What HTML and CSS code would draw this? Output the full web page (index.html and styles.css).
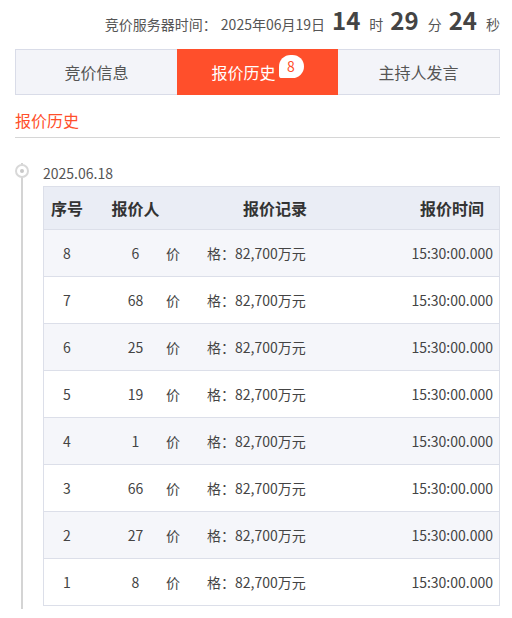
FILE: index.html
```html
<!DOCTYPE html>
<html lang="zh-CN">
<head>
    <meta charset="UTF-8">
    <meta name="viewport" content="width=device-width, initial-scale=1.0">
    <title>报价历史</title>
    <link rel="stylesheet" href="styles.css">
</head>
<body>
    <div class="container">
        <div class="clock">
            <span class="clock-label">竞价服务器时间：</span>
            <span class="clock-date">2025年06月19日</span>
            <span class="clock-num">14</span><span class="clock-unit">时</span>
            <span class="clock-num">29</span><span class="clock-unit">分</span>
            <span class="clock-num">24</span><span class="clock-unit">秒</span>
        </div>

        <div class="tabs">
            <div class="tab">竞价信息</div>
            <div class="tab active">报价历史<span class="badge">8</span></div>
            <div class="tab">主持人发言</div>
        </div>

        <h2 class="section-title">报价历史</h2>

        <div class="timeline">
            <span class="dot"></span>
            <div class="date">2025.06.18</div>
            <div class="records">
                <div class="row head">
                    <div class="c-no">序号</div>
                    <div class="c-who">报价人</div>
                    <div class="c-rec">报价记录</div>
                    <div class="c-time">报价时间</div>
                </div>
                <div class="row">
                    <div class="c-no">8</div>
                    <div class="c-who">6</div>
                    <div class="c-rec"><span>价</span><span class="price">格：82,700万元</span></div>
                    <div class="c-time">15:30:00.000</div>
                </div>
                <div class="row">
                    <div class="c-no">7</div>
                    <div class="c-who">68</div>
                    <div class="c-rec"><span>价</span><span class="price">格：82,700万元</span></div>
                    <div class="c-time">15:30:00.000</div>
                </div>
                <div class="row">
                    <div class="c-no">6</div>
                    <div class="c-who">25</div>
                    <div class="c-rec"><span>价</span><span class="price">格：82,700万元</span></div>
                    <div class="c-time">15:30:00.000</div>
                </div>
                <div class="row">
                    <div class="c-no">5</div>
                    <div class="c-who">19</div>
                    <div class="c-rec"><span>价</span><span class="price">格：82,700万元</span></div>
                    <div class="c-time">15:30:00.000</div>
                </div>
                <div class="row">
                    <div class="c-no">4</div>
                    <div class="c-who">1</div>
                    <div class="c-rec"><span>价</span><span class="price">格：82,700万元</span></div>
                    <div class="c-time">15:30:00.000</div>
                </div>
                <div class="row">
                    <div class="c-no">3</div>
                    <div class="c-who">66</div>
                    <div class="c-rec"><span>价</span><span class="price">格：82,700万元</span></div>
                    <div class="c-time">15:30:00.000</div>
                </div>
                <div class="row">
                    <div class="c-no">2</div>
                    <div class="c-who">27</div>
                    <div class="c-rec"><span>价</span><span class="price">格：82,700万元</span></div>
                    <div class="c-time">15:30:00.000</div>
                </div>
                <div class="row">
                    <div class="c-no">1</div>
                    <div class="c-who">8</div>
                    <div class="c-rec"><span>价</span><span class="price">格：82,700万元</span></div>
                    <div class="c-time">15:30:00.000</div>
                </div>
            </div>
        </div>
    </div>
</body>
</html>
```

FILE: styles.css
```css
* {
    box-sizing: border-box;
    margin: 0;
    padding: 0;
}

body {
    font-family: "Noto Sans CJK SC", "Noto Sans", sans-serif;
    color: #444;
    background-color: #fff;
}

.container {
    padding: 0 12px 0 15px;
}

.clock {
    display: flex;
    justify-content: flex-end;
    align-items: baseline;
    height: 40px;
    padding-top: 2px;
    font-size: 14px;
    color: #555;
}

.clock-date {
    margin-left: 4px;
}

.clock-num {
    font-size: 24px;
    font-weight: bold;
    color: #444;
    margin: 0 9px 0 7px;
}

.tabs {
    display: flex;
    height: 46px;
    margin-top: 9px;
    border: 1px solid #d9dce8;
    background-color: #f3f4f9;
}

.tab {
    flex: 1;
    display: flex;
    align-items: center;
    justify-content: center;
    font-size: 16px;
    color: #555;
}

.tab + .tab {
    border-left: 1px solid #d9dce8;
}

.tab.active {
    background-color: #ff4f2b;
    color: #fff;
    margin: -1px 0;
    border-left: none;
}

.tab.active + .tab {
    border-left: none;
}

.badge {
    display: inline-flex;
    align-items: center;
    justify-content: center;
    width: 25px;
    height: 23px;
    margin: -12px 0 0 3px;
    border-radius: 12px 12px 12px 3px;
    background-color: #fff;
    color: #ff4f2b;
    font-size: 14px;
}

.section-title {
    margin-top: 13px;
    padding-bottom: 5px;
    font-size: 16px;
    font-weight: normal;
    color: #ff4f2b;
    border-bottom: 1px solid #d6d6d6;
}

.timeline {
    position: relative;
    margin: 25px 0 0 6px;
    padding: 0 0 3px 20px;
    border-left: 2px solid #d4d4d4;
}

.dot {
    position: absolute;
    left: -8px;
    top: 1px;
    width: 14px;
    height: 14px;
    border: 2px solid #d8d8d8;
    border-radius: 50%;
    background-color: #fff;
}

.dot::after {
    content: "";
    position: absolute;
    left: 3px;
    top: 3px;
    width: 4px;
    height: 4px;
    border-radius: 50%;
    background-color: #c8c8c8;
}

.date {
    height: 23px;
    line-height: 20px;
    font-size: 14px;
    color: #555;
}

.records {
    border: 1px solid #dcdfe9;
    border-bottom: none;
}

.row {
    display: grid;
    grid-template-columns: 46px 71px 146px 1fr;
    align-items: center;
    height: 47px;
    border-bottom: 1px solid #dcdfe9;
    font-size: 14px;
    color: #444;
}

.row:nth-child(even) {
    background-color: #f5f6fa;
}

.row.head {
    height: 43px;
    background-color: #eaedf5;
    font-size: 16px;
    font-weight: bold;
    color: #333;
}

.c-no {
    text-align: center;
}

.c-who {
    text-align: center;
    padding-left: 20px;
}

.c-rec {
    display: flex;
    padding-left: 5px;
}

.head .c-rec {
    justify-content: flex-end;
}

.price {
    margin-left: 27px;
}

.c-time {
    text-align: right;
    padding-right: 6px;
}

.head .c-time {
    padding-right: 15px;
}
```
